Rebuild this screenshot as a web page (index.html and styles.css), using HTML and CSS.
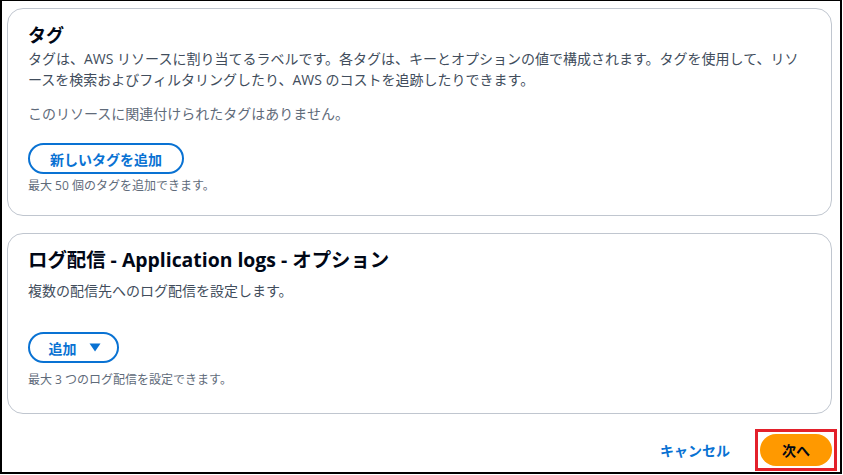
FILE: index.html
```html
<!DOCTYPE html>
<html lang="ja">
<head>
<meta charset="utf-8">
<title>タグとログ配信</title>
<link rel="stylesheet" href="styles.css">
</head>
<body>
<div class="frame">
  <section class="card card-tags">
    <h2 class="title">タグ</h2>
    <p class="desc">タグは、AWS リソースに割り当てるラベルです。各タグは、キーとオプションの値で構成されます。タグを使用して、リソースを検索およびフィルタリングしたり、AWS のコストを追跡したりできます。</p>
    <p class="empty">このリソースに関連付けられたタグはありません。</p>
    <button class="btn-outline btn-tag">新しいタグを追加</button>
    <p class="hint hint-tag">最大 50 個のタグを追加できます。</p>
  </section>
  <section class="card card-logs">
    <h2 class="title title-lg">ログ配信 - Application logs - オプション</h2>
    <p class="desc">複数の配信先へのログ配信を設定します。</p>
    <button class="btn-outline btn-add">追加<span class="caret"><svg width="12" height="9" viewBox="0 0 12 9"><path d="M0.5 0.5 H11.5 L6 8.5 Z" fill="#0972d3"/></svg></span></button>
    <p class="hint hint-log">最大 3 つのログ配信を設定できます。</p>
  </section>
  <div class="footer">
    <a class="link-cancel" href="#">キャンセル</a>
    <span class="highlight"><button class="btn-primary">次へ</button></span>
  </div>
</div>
</body>
</html>
```

FILE: styles.css
```css
* { box-sizing: border-box; }
html, body { margin: 0; padding: 0; background: #fff; }
body {
  font-family: "Open Sans", "Noto Sans CJK JP", sans-serif;
  color: #000716;
}
.frame {
  width: 842px;
  height: 474px;
  border: 2px solid #000;
  border-top-width: 1px;
  padding: 7px 8px 0 5px;
  display: flex;
  flex-direction: column;
}
.card {
  border: 1px solid #c0c6cf;
  border-radius: 16px;
  padding: 0 20px;
  display: flex;
  flex-direction: column;
  align-items: flex-start;
}
.card-tags { padding-top: 14px; padding-bottom: 21px; }
.card-logs { margin-top: 17px; padding-top: 14px; padding-bottom: 25px; }
.title {
  margin: 0 0 1px;
  font-size: 18px;
  line-height: 24px;
  font-weight: 700;
  color: #000716;
}
.title-lg { font-size: 19.4px; margin-bottom: 8px; }
.desc {
  margin: 0;
  font-size: 14px;
  line-height: 21px;
  color: #414d5c;
}
.empty {
  margin: 13px 0 0;
  font-size: 14px;
  line-height: 21px;
  color: #5f6b7a;
}
.btn-outline {
  font-family: inherit;
  font-size: 14px;
  font-weight: 700;
  color: #0972d3;
  background: #fff;
  border: 2px solid #0972d3;
  border-radius: 20px;
  height: 31px;
  display: flex;
  align-items: center;
  justify-content: center;
  white-space: nowrap;
}
.btn-tag { margin-top: 19px; width: 156px; padding: 0 10px; }
.btn-add { margin-top: 31px; width: 91px; padding: 0 16px 0 18px; }
.caret { display: inline-flex; margin-left: 12px; }
.hint {
  margin: 0;
  font-size: 12px;
  line-height: 16px;
  color: #5f6b7a;
}
.hint-tag { margin-top: 4px; }
.hint-log { margin-top: 9px; }
.footer {
  display: flex;
  justify-content: flex-end;
  align-items: center;
  gap: 25px;
  margin-top: 15px;
}
.link-cancel {
  font-size: 14px;
  font-weight: 700;
  color: #0972d3;
  text-decoration: none;
}
.highlight {
  display: flex;
  border: 3px solid #e3202b;
  padding: 2px;
  margin-right: -5px;
}
.btn-primary {
  font-family: inherit;
  font-size: 14px;
  font-weight: 700;
  color: #000716;
  background: #ff9900;
  border: none;
  border-radius: 16px;
  width: 72px;
  height: 32px;
}
```
